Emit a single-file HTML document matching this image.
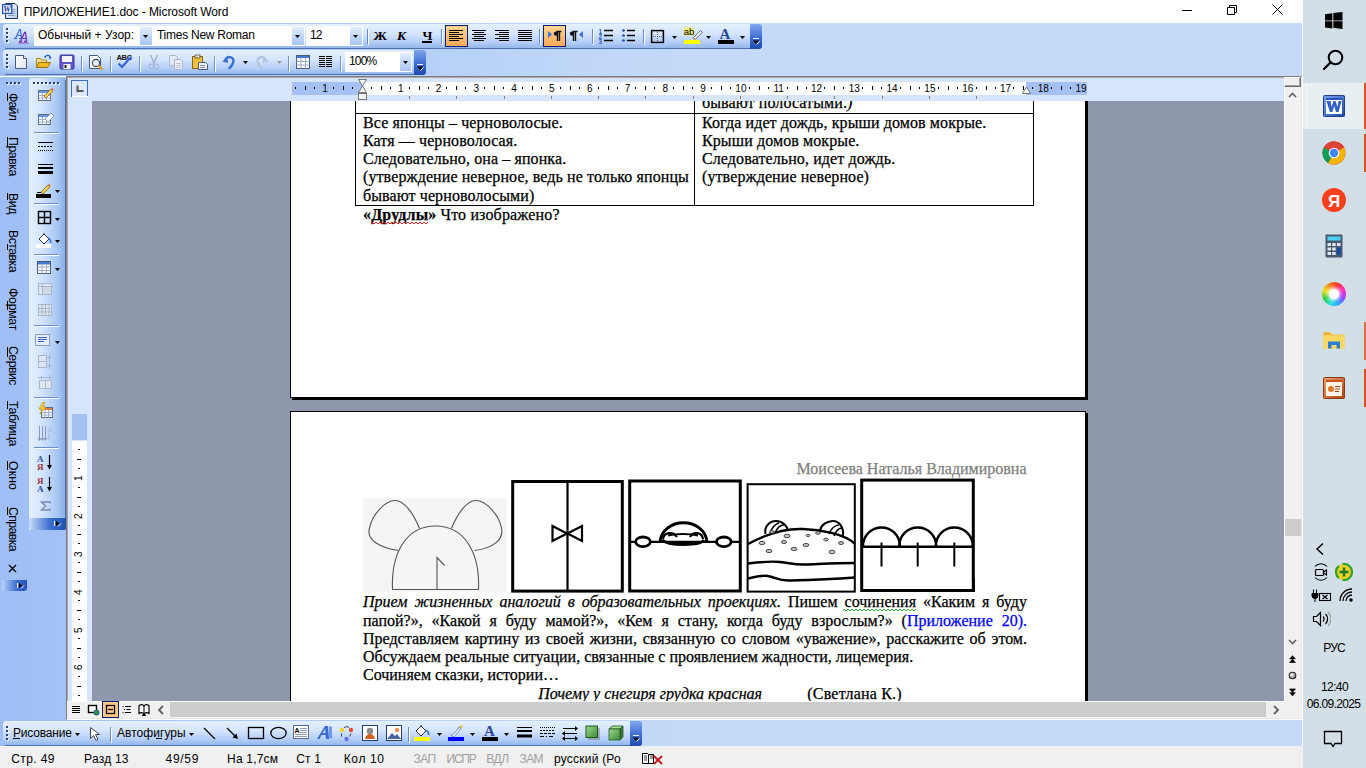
<!DOCTYPE html><html><head><meta charset="utf-8"><style>
*{margin:0;padding:0;box-sizing:border-box}
html,body{width:1366px;height:768px;overflow:hidden;background:#fff;font-family:"Liberation Sans",sans-serif;position:relative}
.a{position:absolute}
.t{position:absolute;white-space:nowrap;line-height:1}
.tb{position:absolute;background:linear-gradient(to bottom,#e4f0fe 0%,#d3e5fd 35%,#b9d3f8 65%,#9bbcef 100%);border-radius:3px 0 0 3px;border-bottom:1px solid #4f72b5}
.chev{position:absolute;background:linear-gradient(to bottom,#86aef0,#3f6fd0 55%,#2550b5);border-radius:0 3px 3px 0;border-bottom:1px solid #1c3f8c}
.sep{position:absolute;width:2px;height:15px;border-left:1px solid #6a8ccb;border-right:1px solid #fff}
.combo{position:absolute;background:#fff;height:20px;font-size:12px;color:#000;line-height:20px;padding-left:4px}
.dd{position:absolute;top:2px;right:1px;width:12px;height:16px;background:linear-gradient(to bottom,#dcebfe,#a9c8f5)}
.act{position:absolute;border:1px solid #0a246a;background:linear-gradient(to bottom,#ffd9a0,#fcb26a)}
.serif{font-family:"Liberation Serif",serif;font-size:16px;color:#000;white-space:nowrap;position:absolute;line-height:1}
.pg div{-webkit-text-stroke:0.25px currentColor}
</style></head><body><div class="a" style="left:0px;top:0px;width:1303px;height:23px;background:#fff"></div>
<svg class="a" style="left:0px;top:0px;" width="22" height="22" viewBox="0 0 22 22"><defs><linearGradient id="dg" x1="0" y1="0" x2="1" y2="1"><stop offset="0" stop-color="#ffffff"/><stop offset="1" stop-color="#b8cdf0"/></linearGradient></defs><path d="M5.5 3.5h9.5l2.5 2.5v12.5h-12z" fill="url(#dg)" stroke="#233556"/><path d="M8 15.5h7M12.5 9.5h3M12.5 11.5h3M12.5 13.5h3" stroke="#8aa2cc"/><rect x="2.6" y="4.6" width="9.2" height="8.8" fill="#fff" stroke="#2456c4" stroke-width="1.4"/><text x="3.3" y="11.6" font-family="Liberation Serif" font-size="8.5" font-weight="bold" font-style="italic" fill="#1a3aa6">W</text></svg>
<div class="t" style="left:23.8px;top:6.44px;font-family:'Liberation Sans',sans-serif;font-size:12px;color:#000;letter-spacing:-0.08px;">ПРИЛОЖЕНИЕ1.doc - Microsoft Word</div>
<div class="a" style="left:1182px;top:10px;width:10px;height:1px;background:#000"></div>
<svg class="a" style="left:1225px;top:3px;" width="13" height="13" viewBox="0 0 13 13"><path d="M2.5 4.5h7v7h-7z M4.5 4.5v-2h7v7h-2" fill="none" stroke="#000"/></svg>
<svg class="a" style="left:1271px;top:3px;" width="13" height="13" viewBox="0 0 13 13"><path d="M1.5 1.5l10 10M11.5 1.5l-10 10" stroke="#000" stroke-width="1"/></svg>
<div class="a" style="left:0px;top:23px;width:1303px;height:53px;background:linear-gradient(to right,#9ebef5 0px,#c4daf8 680px,#c4daf8 1303px)"></div>
<div class="a" style="left:66px;top:76px;width:1237px;height:1px;background:#808080"></div>
<div class="a" style="left:67px;top:77px;width:1236px;height:1px;background:#a8a8a8"></div>
<div class="a" style="left:0px;top:77px;width:67px;height:642px;background:linear-gradient(to right,#9ebef5 0px,#a3c2f5 67px)"></div>
<div class="a" style="left:0px;top:719px;width:1303px;height:27px;background:linear-gradient(to right,#9ebef5 0px,#c4daf8 680px,#c4daf8 1303px)"></div>
<div class="a" style="left:3px;top:24px;width:747px;height:24px;background:linear-gradient(to bottom,#e4f0fe 0%,#d4e5fd 40%,#b5cff7 75%,#94b7ec 100%);border-radius:3px 0 0 3px"></div>
<div class="a" style="left:5px;top:48px;width:745px;height:1px;background:#4f70b0"></div>
<div class="a" style="left:750px;top:24px;width:12px;height:25px;background:linear-gradient(to bottom,#7fa8ee,#3e6dd0 55%,#1f4aad);border-radius:0 3px 3px 0"></div>
<svg class="a" style="left:752px;top:38px;" width="9" height="8" viewBox="0 0 9 8"><path d="M1 0.5h6" stroke="#fff" stroke-width="1"/><path d="M1 2.5h6l-3 3.5z" fill="#000"/><path d="M1 3.5h6l-3 3.5z" fill="none"/><path d="M4.5 6.5l3-3" stroke="#fff"/></svg>
<div class="a" style="left:7px;top:29px;width:2px;height:2px;background:#fff"></div>
<div class="a" style="left:6px;top:28px;width:2px;height:2px;background:#27417e"></div>
<div class="a" style="left:7px;top:33px;width:2px;height:2px;background:#fff"></div>
<div class="a" style="left:6px;top:32px;width:2px;height:2px;background:#27417e"></div>
<div class="a" style="left:7px;top:37px;width:2px;height:2px;background:#fff"></div>
<div class="a" style="left:6px;top:36px;width:2px;height:2px;background:#27417e"></div>
<div class="a" style="left:7px;top:41px;width:2px;height:2px;background:#fff"></div>
<div class="a" style="left:6px;top:40px;width:2px;height:2px;background:#27417e"></div>
<svg class="a" style="left:13px;top:28px;" width="16" height="16" viewBox="0 0 16 16">
<path d="M1 10.5h3M6 10.5h3M2.5 10.5l4-9h1l1 9" fill="none" stroke="#3a6cd0" stroke-width="1.2"/>
<path d="M4.5 7.5h3.5" stroke="#3a6cd0"/>
<path d="M6 13.5h3M11 13.5h3M7.5 13.5l4-9h1l1 9" fill="none" stroke="#6b2fb3" stroke-width="1.3"/>
<path d="M9.5 10.5h3.5" stroke="#6b2fb3"/>
<path d="M5.5 15h10" stroke="#8a3cc8" stroke-width="1"/>
</svg>
<div class="a" style="left:34px;top:26px;width:119px;height:20px;background:#fff"></div>
<div class="t" style="left:38px;top:29.34px;font-family:'Liberation Sans',sans-serif;font-size:12px;color:#000;letter-spacing:0.03px;">Обычный + Узор:</div>
<div class="a" style="left:140px;top:27px;width:12px;height:18px;background:linear-gradient(to bottom,#e2eefe,#c2d8fa 50%,#a7c5f3)"></div>
<svg class="a" style="left:143px;top:35px;" width="5" height="3" viewBox="0 0 5 3"><path d="M0 0h5l-2.5 3z" fill="#000"/></svg>
<div class="a" style="left:153px;top:26px;width:152px;height:20px;background:#fff"></div>
<div class="t" style="left:157px;top:29.34px;font-family:'Liberation Sans',sans-serif;font-size:12px;color:#000;letter-spacing:-0.26px;">Times New Roman</div>
<div class="a" style="left:292px;top:27px;width:12px;height:18px;background:linear-gradient(to bottom,#e2eefe,#c2d8fa 50%,#a7c5f3)"></div>
<svg class="a" style="left:295px;top:35px;" width="5" height="3" viewBox="0 0 5 3"><path d="M0 0h5l-2.5 3z" fill="#000"/></svg>
<div class="a" style="left:306px;top:26px;width:57px;height:20px;background:#fff"></div>
<div class="t" style="left:310px;top:29.34px;font-family:'Liberation Sans',sans-serif;font-size:12px;color:#000;letter-spacing:-0.82px;">12</div>
<div class="a" style="left:350px;top:27px;width:12px;height:18px;background:linear-gradient(to bottom,#e2eefe,#c2d8fa 50%,#a7c5f3)"></div>
<svg class="a" style="left:353px;top:35px;" width="5" height="3" viewBox="0 0 5 3"><path d="M0 0h5l-2.5 3z" fill="#000"/></svg>
<div class="a" style="left:367px;top:29px;width:1px;height:15px;background:#6a8ccb"></div>
<div class="a" style="left:368px;top:30px;width:1px;height:15px;background:#fff"></div>
<div class="t" style="left:373.5px;top:28.69px;font-family:'Liberation Serif',serif;font-size:13.5px;color:#000;font-weight:bold">Ж</div>
<div class="t" style="left:397px;top:28.69px;font-family:'Liberation Serif',serif;font-size:13.5px;color:#000;font-weight:bold"><i>К</i></div>
<div class="t" style="left:422.5px;top:28.69px;font-family:'Liberation Serif',serif;font-size:13.5px;color:#000;font-weight:bold">Ч</div>
<div class="a" style="left:422px;top:41px;width:10px;height:1.5px;background:#000"></div>
<div class="a" style="left:441px;top:29px;width:1px;height:15px;background:#6a8ccb"></div>
<div class="a" style="left:442px;top:30px;width:1px;height:15px;background:#fff"></div>
<div class="a" style="left:445px;top:25px;width:23px;height:22px;border:1px solid #0b1d7a;background:linear-gradient(to bottom,#ffd793,#fdbd72 55%,#fca95a)"></div>
<div class="a" style="left:449px;top:30px;width:14px;height:1px;background:#000"></div>
<div class="a" style="left:449px;top:32px;width:10px;height:1px;background:#000"></div>
<div class="a" style="left:449px;top:34px;width:14px;height:1px;background:#000"></div>
<div class="a" style="left:449px;top:36px;width:10px;height:1px;background:#000"></div>
<div class="a" style="left:449px;top:38px;width:14px;height:1px;background:#000"></div>
<div class="a" style="left:449px;top:40px;width:10px;height:1px;background:#000"></div>
<div class="a" style="left:472px;top:30px;width:14px;height:1px;background:#000"></div>
<div class="a" style="left:474px;top:32px;width:10px;height:1px;background:#000"></div>
<div class="a" style="left:472px;top:34px;width:14px;height:1px;background:#000"></div>
<div class="a" style="left:474px;top:36px;width:10px;height:1px;background:#000"></div>
<div class="a" style="left:472px;top:38px;width:14px;height:1px;background:#000"></div>
<div class="a" style="left:474px;top:40px;width:10px;height:1px;background:#000"></div>
<div class="a" style="left:495px;top:30px;width:14px;height:1px;background:#000"></div>
<div class="a" style="left:499px;top:32px;width:10px;height:1px;background:#000"></div>
<div class="a" style="left:495px;top:34px;width:14px;height:1px;background:#000"></div>
<div class="a" style="left:499px;top:36px;width:10px;height:1px;background:#000"></div>
<div class="a" style="left:495px;top:38px;width:14px;height:1px;background:#000"></div>
<div class="a" style="left:499px;top:40px;width:10px;height:1px;background:#000"></div>
<div class="a" style="left:518px;top:30px;width:14px;height:1px;background:#000"></div>
<div class="a" style="left:518px;top:32px;width:14px;height:1px;background:#000"></div>
<div class="a" style="left:518px;top:34px;width:14px;height:1px;background:#000"></div>
<div class="a" style="left:518px;top:36px;width:14px;height:1px;background:#000"></div>
<div class="a" style="left:518px;top:38px;width:14px;height:1px;background:#000"></div>
<div class="a" style="left:518px;top:40px;width:14px;height:1px;background:#000"></div>
<div class="a" style="left:539px;top:29px;width:1px;height:15px;background:#6a8ccb"></div>
<div class="a" style="left:540px;top:30px;width:1px;height:15px;background:#fff"></div>
<div class="a" style="left:543px;top:25px;width:23px;height:22px;border:1px solid #0b1d7a;background:linear-gradient(to bottom,#ffd793,#fdbd72 55%,#fca95a)"></div>
<svg class="a" style="left:547px;top:30px;" width="16" height="12" viewBox="0 0 16 12"><path d="M1 1l4 3.5-4 3.5z" fill="#3f72d8"/><path d="M9.5 1.5h5M10.5 1.5v9.5M12.5 1.5v9.5" stroke="#111" stroke-width="1.4" fill="none"/><circle cx="9" cy="3.6" r="2.2" fill="#111"/></svg>
<svg class="a" style="left:569px;top:30px;" width="16" height="12" viewBox="0 0 16 12"><path d="M3.5 1.5h5M4.5 1.5v9.5M6.5 1.5v9.5" stroke="#111" stroke-width="1.4" fill="none"/><circle cx="3" cy="3.6" r="2.2" fill="#111"/><path d="M14 1l-4 3.5 4 3.5z" fill="#3f72d8"/></svg>
<div class="a" style="left:592px;top:29px;width:1px;height:15px;background:#6a8ccb"></div>
<div class="a" style="left:593px;top:30px;width:1px;height:15px;background:#fff"></div>
<svg class="a" style="left:597px;top:28px;" width="18" height="16" viewBox="0 0 18 16"><g font-family="Liberation Sans" font-size="6.5" font-weight="bold" fill="#2d5bc0"><text x="1.5" y="5.5">1</text><text x="1.5" y="10.5">2</text><text x="1.5" y="15.5">3</text></g><path d="M7 2.5h9M7 7.5h9M7 12.5h9" stroke="#000" stroke-width="1.3"/></svg>
<svg class="a" style="left:620px;top:28px;" width="18" height="16" viewBox="0 0 18 16"><path d="M3.5 1l2 1.5-2 1.5-2-1.5zM3.5 6l2 1.5-2 1.5-2-1.5zM3.5 11l2 1.5-2 1.5-2-1.5z" fill="#2d55b8"/><path d="M7 2.5h8M7 7.5h8M7 12.5h8" stroke="#000" stroke-width="1.3"/></svg>
<div class="a" style="left:643px;top:29px;width:1px;height:15px;background:#6a8ccb"></div>
<div class="a" style="left:644px;top:30px;width:1px;height:15px;background:#fff"></div>
<svg class="a" style="left:650px;top:29px;" width="16" height="16" viewBox="0 0 16 16"><rect x="1.6" y="1.6" width="11.8" height="11.8" fill="none" stroke="#000" stroke-width="1.5"/><rect x="3" y="7" width="1" height="1" fill="#666"/><rect x="5" y="7" width="1" height="1" fill="#666"/><rect x="7" y="7" width="1" height="1" fill="#666"/><rect x="9" y="7" width="1" height="1" fill="#666"/><rect x="11" y="7" width="1" height="1" fill="#666"/><rect x="7" y="3" width="1" height="1" fill="#666"/><rect x="7" y="5" width="1" height="1" fill="#666"/><rect x="7" y="9" width="1" height="1" fill="#666"/><rect x="7" y="11" width="1" height="1" fill="#666"/></svg>
<svg class="a" style="left:672px;top:36px;" width="5" height="3" viewBox="0 0 5 3"><path d="M0 0h5l-2.5 3z" fill="#000"/></svg>
<svg class="a" style="left:683px;top:27px;" width="20" height="19" viewBox="0 0 20 19"><rect x="1" y="0.5" width="10" height="8" fill="#f2ee70"/><text x="0.8" y="7.8" font-family="Liberation Sans" font-size="9.5" fill="#000">ab</text><path d="M10.5 10.5l7-7 1.8 1.8-7 7z" fill="#fafafa" stroke="#4a5a7a" stroke-width="0.9"/><path d="M9.5 11.5l1-1 1.8 1.8-1 1z" fill="#e0a050"/><rect x="1" y="13" width="16" height="4" fill="#ffff00"/></svg>
<svg class="a" style="left:706px;top:36px;" width="5" height="3" viewBox="0 0 5 3"><path d="M0 0h5l-2.5 3z" fill="#000"/></svg>
<svg class="a" style="left:716px;top:27px;" width="20" height="19" viewBox="0 0 20 19"><text x="9" y="12" text-anchor="middle" font-family="Liberation Serif" font-size="15" font-weight="bold" fill="#27489a">A</text><rect x="2" y="13" width="16" height="4" fill="#000"/></svg>
<svg class="a" style="left:740px;top:36px;" width="5" height="3" viewBox="0 0 5 3"><path d="M0 0h5l-2.5 3z" fill="#000"/></svg>
<div class="a" style="left:3px;top:50px;width:411px;height:24px;background:linear-gradient(to bottom,#e4f0fe 0%,#d4e5fd 40%,#b5cff7 75%,#94b7ec 100%);border-radius:3px 0 0 3px"></div>
<div class="a" style="left:5px;top:74px;width:409px;height:1px;background:#4f70b0"></div>
<div class="a" style="left:414px;top:50px;width:12px;height:25px;background:linear-gradient(to bottom,#7fa8ee,#3e6dd0 55%,#1f4aad);border-radius:0 3px 3px 0"></div>
<svg class="a" style="left:416px;top:64px;" width="9" height="8" viewBox="0 0 9 8"><path d="M1 0.5h6" stroke="#fff" stroke-width="1"/><path d="M1 2.5h6l-3 3.5z" fill="#000"/><path d="M1 3.5h6l-3 3.5z" fill="none"/><path d="M4.5 6.5l3-3" stroke="#fff"/></svg>
<div class="a" style="left:7px;top:55px;width:2px;height:2px;background:#fff"></div>
<div class="a" style="left:6px;top:54px;width:2px;height:2px;background:#27417e"></div>
<div class="a" style="left:7px;top:59px;width:2px;height:2px;background:#fff"></div>
<div class="a" style="left:6px;top:58px;width:2px;height:2px;background:#27417e"></div>
<div class="a" style="left:7px;top:63px;width:2px;height:2px;background:#fff"></div>
<div class="a" style="left:6px;top:62px;width:2px;height:2px;background:#27417e"></div>
<div class="a" style="left:7px;top:67px;width:2px;height:2px;background:#fff"></div>
<div class="a" style="left:6px;top:66px;width:2px;height:2px;background:#27417e"></div>
<svg class="a" style="left:14px;top:54px;" width="14" height="16" viewBox="0 0 14 16"><path d="M1.5 1.5h8l3 3v10h-11z" fill="url(#pg)" stroke="#44597c"/><path d="M9.5 1.5v3h3" fill="#fff" stroke="#44597c"/><defs><linearGradient id="pg" x1="0" y1="0" x2="1" y2="1"><stop offset="0" stop-color="#fff"/><stop offset="1" stop-color="#dfe4ec"/></linearGradient></defs></svg>
<svg class="a" style="left:35px;top:54px;" width="18" height="16" viewBox="0 0 18 16"><path d="M1.5 4.5h4l1 1.5h5v7.5h-10z" fill="#f6dc8a" stroke="#b08a2a"/><path d="M3.5 8.5h12l-3 5h-11z" fill="#f2b91f" stroke="#9a7213"/><path d="M9.5 3.5c2-3 5-3 6 0" fill="none" stroke="#2b5fc8" stroke-width="1.4"/><path d="M14 2.5l2.5 1.5-2 1.5z" fill="#2b5fc8"/></svg>
<svg class="a" style="left:59px;top:54px;" width="16" height="16" viewBox="0 0 16 16"><rect x="1" y="1" width="14" height="14" rx="1" fill="#5d58c8" stroke="#3b3796"/><rect x="3" y="2" width="10" height="6" fill="#f4f4fa"/><rect x="4.5" y="10" width="7" height="5" fill="#f4f4f4"/><rect x="5.5" y="11" width="2" height="3" fill="#222"/></svg>
<div class="a" style="left:81px;top:56px;width:1px;height:15px;background:#6a8ccb"></div>
<div class="a" style="left:82px;top:57px;width:1px;height:15px;background:#fff"></div>
<svg class="a" style="left:88px;top:54px;" width="17" height="17" viewBox="0 0 17 17"><path d="M1.5 1.5h8l3 3v10h-11z" fill="#fff" stroke="#44597c"/><circle cx="8" cy="9" r="3.6" fill="#e8eef6" stroke="#3c4a64" stroke-width="1.2"/><path d="M10.5 11.5l4 4" stroke="#e39a2e" stroke-width="2.4"/></svg>
<div class="a" style="left:110px;top:56px;width:1px;height:15px;background:#6a8ccb"></div>
<div class="a" style="left:111px;top:57px;width:1px;height:15px;background:#fff"></div>
<svg class="a" style="left:116px;top:53px;" width="18" height="17" viewBox="0 0 18 17"><text x="0.5" y="7" font-family="Liberation Sans" font-size="7.5" font-weight="bold" fill="#111" letter-spacing="-0.3">ABC</text><path d="M2.5 10.5l3.5 3.5 9-10" fill="none" stroke="#3a64d6" stroke-width="2.2"/></svg>
<div class="a" style="left:139px;top:56px;width:1px;height:15px;background:#6a8ccb"></div>
<div class="a" style="left:140px;top:57px;width:1px;height:15px;background:#fff"></div>
<svg class="a" style="left:148px;top:54px;" width="12" height="16" viewBox="0 0 12 16"><path d="M2.5 1l4 9M9.5 1l-4 9" stroke="#9fb2d6" stroke-width="1.4"/><circle cx="3.5" cy="12.5" r="2.3" fill="none" stroke="#a8bad8" stroke-width="1.3"/><circle cx="8.5" cy="12.5" r="2.3" fill="none" stroke="#a8bad8" stroke-width="1.3"/></svg>
<svg class="a" style="left:168px;top:54px;" width="17" height="16" viewBox="0 0 17 16"><path d="M1.5 1.5h6l2 2v8h-8z" fill="#e2e8f2" stroke="#a9b8d3"/><path d="M6.5 5.5h6l2 2v8h-8z" fill="#e9eef6" stroke="#a9b8d3"/><path d="M8 9.5h5M8 11.5h5M8 13.5h5" stroke="#b8c4dc"/></svg>
<svg class="a" style="left:191px;top:54px;" width="18" height="16" viewBox="0 0 18 16"><rect x="1.5" y="2.5" width="10" height="12" fill="#f0c040" stroke="#8a6a1a"/><rect x="4" y="1" width="5" height="3" fill="#d6d6d6" stroke="#6a5a2a" stroke-width="0.8"/><path d="M7.5 8.5h7l2 2v5h-9z" fill="#eef2f8" stroke="#44597c"/><path d="M9 11.5h5M9 13.5h5" stroke="#8090b0"/></svg>
<div class="a" style="left:214px;top:56px;width:1px;height:15px;background:#6a8ccb"></div>
<div class="a" style="left:215px;top:57px;width:1px;height:15px;background:#fff"></div>
<svg class="a" style="left:221px;top:54px;" width="16" height="15" viewBox="0 0 16 15"><path d="M4 6c3-5 10-3 8 3-1 3-3 4-4 6" fill="none" stroke="#3a72d8" stroke-width="2.4"/><path d="M1 7.5l5.5-4 0.5 5.5z" fill="#3a72d8"/></svg>
<svg class="a" style="left:243px;top:61px;" width="5" height="3" viewBox="0 0 5 3"><path d="M0 0h5l-2.5 3z" fill="#000"/></svg>
<svg class="a" style="left:254px;top:54px;" width="16" height="15" viewBox="0 0 16 15"><path d="M12 6c-3-5-10-3-8 3 1 3 3 4 4 6" fill="none" stroke="#b6c6e0" stroke-width="2.4"/><path d="M15 7.5l-5.5-4-0.5 5.5z" fill="#b6c6e0"/></svg>
<svg class="a" style="left:277px;top:61px;" width="5" height="3" viewBox="0 0 5 3"><path d="M0 0h5l-2.5 3z" fill="#9a9a9a"/></svg>
<div class="a" style="left:288px;top:56px;width:1px;height:15px;background:#6a8ccb"></div>
<div class="a" style="left:289px;top:57px;width:1px;height:15px;background:#fff"></div>
<svg class="a" style="left:295px;top:54px;" width="16" height="16" viewBox="0 0 16 16"><rect x="1.5" y="1.5" width="13" height="13" fill="#fff" stroke="#4a5a78"/><rect x="2" y="2" width="12" height="2" fill="#4a78d8"/><path d="M1.5 7.5h13M1.5 11h13M6 4v10.5M10.5 4v10.5" stroke="#9aaac6"/></svg>
<svg class="a" style="left:318px;top:55px;" width="16" height="13" viewBox="0 0 16 13"><path d="M1 1.5h6M1 3.5h6M1 5.5h6M1 7.5h6M1 9.5h6M1 11.5h6M8 1.5h6M8 3.5h6M8 5.5h6M8 7.5h6M8 9.5h6M8 11.5h6" stroke="#000" stroke-width="1.2"/></svg>
<div class="a" style="left:340px;top:56px;width:1px;height:15px;background:#6a8ccb"></div>
<div class="a" style="left:341px;top:57px;width:1px;height:15px;background:#fff"></div>
<div class="a" style="left:345px;top:52px;width:67px;height:20px;background:#fff"></div>
<div class="t" style="left:349px;top:54.64px;font-family:'Liberation Sans',sans-serif;font-size:12px;color:#000;letter-spacing:-0.82px;">100%</div>
<div class="a" style="left:400px;top:53px;width:11px;height:18px;background:linear-gradient(to bottom,#e2eefe,#c2d8fa 50%,#a7c5f3)"></div>
<svg class="a" style="left:403px;top:61px;" width="5" height="3" viewBox="0 0 5 3"><path d="M0 0h5l-2.5 3z" fill="#000"/></svg>
<div class="a" style="left:7px;top:83px;width:2px;height:2px;background:#fff"></div>
<div class="a" style="left:6px;top:82px;width:2px;height:2px;background:#27417e"></div>
<div class="a" style="left:11px;top:83px;width:2px;height:2px;background:#fff"></div>
<div class="a" style="left:10px;top:82px;width:2px;height:2px;background:#27417e"></div>
<div class="a" style="left:15px;top:83px;width:2px;height:2px;background:#fff"></div>
<div class="a" style="left:14px;top:82px;width:2px;height:2px;background:#27417e"></div>
<div class="a" style="left:19px;top:83px;width:2px;height:2px;background:#fff"></div>
<div class="a" style="left:18px;top:82px;width:2px;height:2px;background:#27417e"></div>
<div class="a" style="left:6px;top:93px;writing-mode:vertical-rl;font-family:'Liberation Sans',sans-serif;font-size:12.3px;line-height:14px;letter-spacing:-0.81px;color:#000;white-space:nowrap">Файл</div>
<div class="a" style="left:6px;top:137px;writing-mode:vertical-rl;font-family:'Liberation Sans',sans-serif;font-size:12.3px;line-height:14px;letter-spacing:-0.42px;color:#000;white-space:nowrap">Правка</div>
<div class="a" style="left:6px;top:193px;writing-mode:vertical-rl;font-family:'Liberation Sans',sans-serif;font-size:12.3px;line-height:14px;letter-spacing:-0.42px;color:#000;white-space:nowrap">Вид</div>
<div class="a" style="left:6px;top:230px;writing-mode:vertical-rl;font-family:'Liberation Sans',sans-serif;font-size:12.3px;line-height:14px;letter-spacing:-0.53px;color:#000;white-space:nowrap">Вставка</div>
<div class="a" style="left:6px;top:288px;writing-mode:vertical-rl;font-family:'Liberation Sans',sans-serif;font-size:12.3px;line-height:14px;letter-spacing:-0.28px;color:#000;white-space:nowrap">Формат</div>
<div class="a" style="left:6px;top:346px;writing-mode:vertical-rl;font-family:'Liberation Sans',sans-serif;font-size:12.3px;line-height:14px;letter-spacing:-0.52px;color:#000;white-space:nowrap">Сервис</div>
<div class="a" style="left:6px;top:401px;writing-mode:vertical-rl;font-family:'Liberation Sans',sans-serif;font-size:12.3px;line-height:14px;letter-spacing:-0.46px;color:#000;white-space:nowrap">Таблица</div>
<div class="a" style="left:6px;top:461px;writing-mode:vertical-rl;font-family:'Liberation Sans',sans-serif;font-size:12.3px;line-height:14px;letter-spacing:0.1px;color:#000;white-space:nowrap">Окно</div>
<div class="a" style="left:6px;top:507px;writing-mode:vertical-rl;font-family:'Liberation Sans',sans-serif;font-size:12.3px;line-height:14px;letter-spacing:-0.61px;color:#000;white-space:nowrap">Справка</div>
<div class="a" style="left:7px;top:93px;width:1px;height:8px;background:#000"></div>
<div class="a" style="left:7px;top:137px;width:1px;height:9px;background:#000"></div>
<div class="a" style="left:7px;top:193px;width:1px;height:7px;background:#000"></div>
<div class="a" style="left:7px;top:244px;width:1px;height:6px;background:#000"></div>
<div class="a" style="left:7px;top:301px;width:1px;height:9px;background:#000"></div>
<div class="a" style="left:7px;top:347px;width:1px;height:10px;background:#000"></div>
<div class="a" style="left:7px;top:401px;width:1px;height:8px;background:#000"></div>
<div class="a" style="left:7px;top:461px;width:1px;height:9px;background:#000"></div>
<div class="a" style="left:7px;top:507px;width:1px;height:8px;background:#000"></div>
<svg class="a" style="left:8px;top:564px;" width="9" height="9" viewBox="0 0 9 9"><path d="M1 1l7 7M8 1l-7 7" stroke="#000" stroke-width="1.3"/></svg>
<div class="a" style="left:2px;top:580px;width:25px;height:11px;background:linear-gradient(to right,#b9d3fb,#3a6ad0 60%,#2552b8);border-radius:0 0 3px 3px"></div>
<svg class="a" style="left:17px;top:582px;" width="8" height="8" viewBox="0 0 8 8"><path d="M0.5 1v5" stroke="#fff"/><path d="M2 1l3.5 2.5L2 6z" fill="#000"/><path d="M4 6.5l3-3" stroke="#fff"/></svg>
<div class="a" style="left:29px;top:78px;width:37px;height:452px;background:linear-gradient(to right,#e4f0fe 0%,#d2e4fd 35%,#a9c8f4 75%,#86ace6 100%);border-radius:3px 3px 0 0"></div>
<div class="a" style="left:65px;top:80px;width:1px;height:450px;background:#4f70b0"></div>
<div class="a" style="left:34px;top:83px;width:2px;height:2px;background:#fff"></div>
<div class="a" style="left:33px;top:82px;width:2px;height:2px;background:#27417e"></div>
<div class="a" style="left:38px;top:83px;width:2px;height:2px;background:#fff"></div>
<div class="a" style="left:37px;top:82px;width:2px;height:2px;background:#27417e"></div>
<div class="a" style="left:42px;top:83px;width:2px;height:2px;background:#fff"></div>
<div class="a" style="left:41px;top:82px;width:2px;height:2px;background:#27417e"></div>
<div class="a" style="left:46px;top:83px;width:2px;height:2px;background:#fff"></div>
<div class="a" style="left:45px;top:82px;width:2px;height:2px;background:#27417e"></div>
<div class="a" style="left:50px;top:83px;width:2px;height:2px;background:#fff"></div>
<div class="a" style="left:49px;top:82px;width:2px;height:2px;background:#27417e"></div>
<div class="a" style="left:54px;top:83px;width:2px;height:2px;background:#fff"></div>
<div class="a" style="left:53px;top:82px;width:2px;height:2px;background:#27417e"></div>
<div class="a" style="left:58px;top:83px;width:2px;height:2px;background:#fff"></div>
<div class="a" style="left:57px;top:82px;width:2px;height:2px;background:#27417e"></div>
<div class="a" style="left:34px;top:132px;width:24px;height:1px;background:#6a8ccb"></div>
<div class="a" style="left:35px;top:133px;width:24px;height:1px;background:#fff"></div>
<div class="a" style="left:34px;top:203px;width:24px;height:1px;background:#6a8ccb"></div>
<div class="a" style="left:35px;top:204px;width:24px;height:1px;background:#fff"></div>
<div class="a" style="left:34px;top:254px;width:24px;height:1px;background:#6a8ccb"></div>
<div class="a" style="left:35px;top:255px;width:24px;height:1px;background:#fff"></div>
<div class="a" style="left:34px;top:325px;width:24px;height:1px;background:#6a8ccb"></div>
<div class="a" style="left:35px;top:326px;width:24px;height:1px;background:#fff"></div>
<div class="a" style="left:34px;top:397px;width:24px;height:1px;background:#6a8ccb"></div>
<div class="a" style="left:35px;top:398px;width:24px;height:1px;background:#fff"></div>
<div class="a" style="left:34px;top:447px;width:24px;height:1px;background:#6a8ccb"></div>
<div class="a" style="left:35px;top:448px;width:24px;height:1px;background:#fff"></div>
<div class="a" style="left:29px;top:518px;width:37px;height:12px;background:linear-gradient(to right,#c8dcfb,#4070d0 55%,#2050b0);border-radius:0 0 3px 3px"></div>
<svg class="a" style="left:54px;top:520px;" width="9" height="8" viewBox="0 0 9 8"><path d="M0.5 1v5" stroke="#fff"/><path d="M2 1l3.5 2.5L2 6z" fill="#000"/><path d="M4 6.5l3-3" stroke="#fff"/></svg>
<svg class="a" style="left:37px;top:86px;" width="17" height="17" viewBox="0 0 17 17"><rect x="1.5" y="4.5" width="12" height="10" fill="#fff" stroke="#5a6a8a"/><rect x="2" y="5" width="11" height="2" fill="#6a96e0"/><path d="M1.5 9.5h12M1.5 12h12M5.5 7v7.5M9.5 7v7.5" stroke="#a0b0cc"/><path d="M7 10l7-7 2 2-7 7z" fill="#f2cc50" stroke="#8a6a1a" stroke-width="0.8"/><path d="M14 3l1-1.5 2 2-1.5 1z" fill="#e07050"/></svg>
<svg class="a" style="left:37px;top:110px;" width="17" height="17" viewBox="0 0 17 17"><rect x="1.5" y="4.5" width="12" height="10" fill="#fff" stroke="#5a6a8a"/><rect x="2" y="5" width="11" height="2" fill="#6a96e0"/><path d="M1.5 9.5h12M1.5 12h12M5.5 7v7.5M9.5 7v7.5" stroke="#a0b0cc"/><path d="M8 9l6-6 3 3-6 6z" fill="#f4f6fa" stroke="#7a8aa8" stroke-width="0.8"/></svg>
<svg class="a" style="left:37px;top:138px;" width="17" height="17" viewBox="0 0 17 17"><path d="M1 4.5h15" stroke="#000"/><path d="M1 8.5h15" stroke="#000" stroke-dasharray="2 1"/><path d="M1 12.5h15" stroke="#000" stroke-dasharray="1 1"/></svg>
<svg class="a" style="left:37px;top:160px;" width="17" height="17" viewBox="0 0 17 17"><path d="M1 4.5h15" stroke="#000"/><path d="M1 8h15" stroke="#000" stroke-width="2"/><path d="M1 12.5h15" stroke="#000" stroke-width="3"/></svg>
<svg class="a" style="left:36px;top:182px;" width="17" height="17" viewBox="0 0 17 17"><path d="M5 10l7-7 2 2-7 7z" fill="#f2cc50" stroke="#8a6a1a" stroke-width="0.8"/><path d="M12 3l1-1.5 2 2-1.5 1z" fill="#e07050"/><rect x="0" y="12" width="15" height="4" fill="#000"/><path d="M1 10.5h4" stroke="#000"/></svg>
<svg class="a" style="left:55px;top:190px;" width="5" height="3" viewBox="0 0 5 3"><path d="M0 0h5l-2.5 3z" fill="#000"/></svg>
<svg class="a" style="left:37px;top:210px;" width="17" height="17" viewBox="0 0 17 17"><rect x="1.5" y="1.5" width="12" height="12" fill="none" stroke="#000" stroke-width="1.4"/><path d="M7.5 1.5v12M1.5 7.5h12" stroke="#000" stroke-width="1.4"/></svg>
<svg class="a" style="left:55px;top:218px;" width="5" height="3" viewBox="0 0 5 3"><path d="M0 0h5l-2.5 3z" fill="#000"/></svg>
<svg class="a" style="left:36px;top:232px;" width="17" height="17" viewBox="0 0 17 17"><path d="M3 7l5-5 5 5-5 5z" fill="#fff" stroke="#333"/><path d="M8 2v-1" stroke="#333"/><path d="M12 6c2 1 3 3 2.5 5" fill="none" stroke="#3a72d8" stroke-width="1.6"/><rect x="0" y="12" width="15" height="4" fill="#fff"/></svg>
<svg class="a" style="left:55px;top:240px;" width="5" height="3" viewBox="0 0 5 3"><path d="M0 0h5l-2.5 3z" fill="#000"/></svg>
<svg class="a" style="left:36px;top:260px;" width="17" height="17" viewBox="0 0 17 17"><rect x="1.5" y="1.5" width="13" height="12" fill="#fff" stroke="#4a5a78"/><rect x="2" y="2" width="12" height="2.5" fill="#4a78d8"/><path d="M1.5 7h13M1.5 10.5h13M6 4.5v9M10.5 4.5v9" stroke="#9aaac6"/></svg>
<svg class="a" style="left:55px;top:268px;" width="5" height="3" viewBox="0 0 5 3"><path d="M0 0h5l-2.5 3z" fill="#000"/></svg>
<svg class="a" style="left:37px;top:281px;" width="17" height="17" viewBox="0 0 17 17"><rect x="1.5" y="2.5" width="13" height="11" fill="#dfe6f2" stroke="#aab6cc"/><path d="M1.5 5.5h13M5.5 2.5v11" stroke="#aab6cc"/><rect x="6" y="6" width="8" height="7" fill="#cfd8e8"/></svg>
<svg class="a" style="left:37px;top:302px;" width="17" height="17" viewBox="0 0 17 17"><rect x="1.5" y="2.5" width="13" height="11" fill="#dfe6f2" stroke="#aab6cc"/><path d="M1.5 6.5h13M1.5 10h13M5 2.5v11M8.5 2.5v11M12 2.5v11" stroke="#aab6cc"/></svg>
<svg class="a" style="left:35px;top:333px;" width="17" height="17" viewBox="0 0 17 17"><rect x="0.5" y="1.5" width="14" height="11" fill="#e6ecf8" stroke="#8a9ab8"/><path d="M3 4.5h9M3 6.5h9M3 8.5h6" stroke="#3a64c0"/></svg>
<svg class="a" style="left:55px;top:341px;" width="5" height="3" viewBox="0 0 5 3"><path d="M0 0h5l-2.5 3z" fill="#000"/></svg>
<svg class="a" style="left:37px;top:353px;" width="17" height="17" viewBox="0 0 17 17"><rect x="1.5" y="2.5" width="8" height="12" fill="#dfe6f2" stroke="#aab6cc"/><path d="M1.5 8.5h8M12.5 1v15M10.5 4.5h4M10.5 12.5h4" stroke="#aab6cc"/></svg>
<svg class="a" style="left:37px;top:374px;" width="17" height="17" viewBox="0 0 17 17"><rect x="2.5" y="6.5" width="12" height="8" fill="#dfe6f2" stroke="#aab6cc"/><path d="M8.5 6.5v8M1 3.5h15M4.5 1.5v4M12.5 1.5v4" stroke="#aab6cc"/></svg>
<svg class="a" style="left:37px;top:402px;" width="17" height="17" viewBox="0 0 17 17"><rect x="4.5" y="5.5" width="11" height="10" fill="#fff" stroke="#5a6a8a"/><rect x="5" y="6" width="10" height="2" fill="#e07a3a"/><path d="M4.5 10.5h11M4.5 13h11M8 8v7.5M11.5 8v7.5" stroke="#a0b0cc"/><path d="M6 0l-4 7h3l-2 5 6-7h-3l2-5z" fill="#f6d23a" stroke="#b08a10" stroke-width="0.6"/></svg>
<svg class="a" style="left:37px;top:425px;" width="17" height="17" viewBox="0 0 17 17"><path d="M2.5 1v14M5.5 1v14M8.5 1v14" stroke="#8a9ab8"/><path d="M1 13l1.5 2.5 1.5-2.5M4 13l1.5 2.5 1.5-2.5M7 13l1.5 2.5 1.5-2.5" fill="none" stroke="#8a9ab8"/><text x="10" y="7" font-family="Liberation Serif" font-size="7" fill="#aab6cc">A</text><path d="M12 8v7" stroke="#aab6cc"/></svg>
<svg class="a" style="left:37px;top:454px;" width="17" height="17" viewBox="0 0 17 17"><text x="0" y="7.5" font-family="Liberation Serif" font-size="9" font-weight="bold" fill="#2a4c9c">A</text><text x="0" y="16" font-family="Liberation Serif" font-size="9" font-weight="bold" fill="#a0303a">Я</text><path d="M12.5 1v13" stroke="#000" stroke-width="1.2"/><path d="M10 11l2.5 4.5 2.5-4.5z" fill="#000"/></svg>
<svg class="a" style="left:37px;top:476px;" width="17" height="17" viewBox="0 0 17 17"><text x="0" y="7.5" font-family="Liberation Serif" font-size="9" font-weight="bold" fill="#a0303a">Я</text><text x="0" y="16" font-family="Liberation Serif" font-size="9" font-weight="bold" fill="#2a4c9c">A</text><path d="M12.5 1v13" stroke="#000" stroke-width="1.2"/><path d="M10 11l2.5 4.5 2.5-4.5z" fill="#000"/></svg>
<svg class="a" style="left:37px;top:497px;" width="17" height="17" viewBox="0 0 17 17"><path d="M13 6.5v-1.5h-8.5l4 4-4 4h8.5v-1.5" fill="none" stroke="#7a88b0" stroke-width="1.4"/></svg>
<div class="a" style="left:66px;top:76px;width:1px;height:643px;background:#808080"></div>
<div class="a" style="left:67px;top:77px;width:1px;height:642px;background:#a8a8a8"></div>
<div class="a" style="left:68px;top:78px;width:1217px;height:23px;background:#d6e5fb"></div>
<div class="a" style="left:71px;top:80px;width:17px;height:17px;border:1px solid #3c6fd0;background:#dde9fb"></div>
<div class="a" style="left:72px;top:96px;width:16px;height:1px;background:#fff"></div>
<svg class="a" style="left:76px;top:85px;" width="8" height="8" viewBox="0 0 8 8"><path d="M1.5 0.5v5.5h6" fill="none" stroke="#555" stroke-width="2"/></svg>
<div class="a" style="left:292px;top:82px;width:71px;height:13px;background:#a5c1f3"></div>
<div class="a" style="left:363px;top:82px;width:663px;height:13px;background:#fff"></div>
<div class="a" style="left:1026px;top:82px;width:61px;height:13px;background:#a5c1f3"></div>
<div class="a" style="left:295px;top:87px;width:1px;height:2px;background:#000"></div>
<div class="a" style="left:314px;top:87px;width:1px;height:2px;background:#000"></div>
<div class="a" style="left:305px;top:86px;width:1px;height:4px;background:#000"></div>
<div class="a" style="left:333px;top:87px;width:1px;height:2px;background:#000"></div>
<div class="a" style="left:352px;top:87px;width:1px;height:2px;background:#000"></div>
<div class="a" style="left:343px;top:86px;width:1px;height:4px;background:#000"></div>
<div class="t" style="left:322.31942934782603px;top:83.53px;font-family:'Liberation Sans',sans-serif;font-size:10px;color:#000;">1</div>
<div class="a" style="left:371px;top:87px;width:1px;height:2px;background:#000"></div>
<div class="a" style="left:390px;top:87px;width:1px;height:2px;background:#000"></div>
<div class="a" style="left:381px;top:86px;width:1px;height:4px;background:#000"></div>
<div class="a" style="left:409px;top:87px;width:1px;height:2px;background:#000"></div>
<div class="a" style="left:428px;top:87px;width:1px;height:2px;background:#000"></div>
<div class="a" style="left:419px;top:86px;width:1px;height:4px;background:#000"></div>
<div class="t" style="left:397.91942934782605px;top:83.53px;font-family:'Liberation Sans',sans-serif;font-size:10px;color:#000;">1</div>
<div class="a" style="left:446px;top:87px;width:1px;height:2px;background:#000"></div>
<div class="a" style="left:465px;top:87px;width:1px;height:2px;background:#000"></div>
<div class="a" style="left:456px;top:86px;width:1px;height:4px;background:#000"></div>
<div class="t" style="left:435.71942934782606px;top:83.53px;font-family:'Liberation Sans',sans-serif;font-size:10px;color:#000;">2</div>
<div class="a" style="left:484px;top:87px;width:1px;height:2px;background:#000"></div>
<div class="a" style="left:503px;top:87px;width:1px;height:2px;background:#000"></div>
<div class="a" style="left:494px;top:86px;width:1px;height:4px;background:#000"></div>
<div class="t" style="left:473.519429347826px;top:83.53px;font-family:'Liberation Sans',sans-serif;font-size:10px;color:#000;">3</div>
<div class="a" style="left:522px;top:87px;width:1px;height:2px;background:#000"></div>
<div class="a" style="left:541px;top:87px;width:1px;height:2px;background:#000"></div>
<div class="a" style="left:532px;top:86px;width:1px;height:4px;background:#000"></div>
<div class="t" style="left:511.319429347826px;top:83.53px;font-family:'Liberation Sans',sans-serif;font-size:10px;color:#000;">4</div>
<div class="a" style="left:560px;top:87px;width:1px;height:2px;background:#000"></div>
<div class="a" style="left:579px;top:87px;width:1px;height:2px;background:#000"></div>
<div class="a" style="left:570px;top:86px;width:1px;height:4px;background:#000"></div>
<div class="t" style="left:549.1194293478261px;top:83.53px;font-family:'Liberation Sans',sans-serif;font-size:10px;color:#000;">5</div>
<div class="a" style="left:598px;top:87px;width:1px;height:2px;background:#000"></div>
<div class="a" style="left:617px;top:87px;width:1px;height:2px;background:#000"></div>
<div class="a" style="left:608px;top:86px;width:1px;height:4px;background:#000"></div>
<div class="t" style="left:586.919429347826px;top:83.53px;font-family:'Liberation Sans',sans-serif;font-size:10px;color:#000;">6</div>
<div class="a" style="left:635px;top:87px;width:1px;height:2px;background:#000"></div>
<div class="a" style="left:654px;top:87px;width:1px;height:2px;background:#000"></div>
<div class="a" style="left:645px;top:86px;width:1px;height:4px;background:#000"></div>
<div class="t" style="left:624.7194293478261px;top:83.53px;font-family:'Liberation Sans',sans-serif;font-size:10px;color:#000;">7</div>
<div class="a" style="left:673px;top:87px;width:1px;height:2px;background:#000"></div>
<div class="a" style="left:692px;top:87px;width:1px;height:2px;background:#000"></div>
<div class="a" style="left:683px;top:86px;width:1px;height:4px;background:#000"></div>
<div class="t" style="left:662.5194293478261px;top:83.53px;font-family:'Liberation Sans',sans-serif;font-size:10px;color:#000;">8</div>
<div class="a" style="left:711px;top:87px;width:1px;height:2px;background:#000"></div>
<div class="a" style="left:730px;top:87px;width:1px;height:2px;background:#000"></div>
<div class="a" style="left:721px;top:86px;width:1px;height:4px;background:#000"></div>
<div class="t" style="left:700.319429347826px;top:83.53px;font-family:'Liberation Sans',sans-serif;font-size:10px;color:#000;">9</div>
<div class="a" style="left:749px;top:87px;width:1px;height:2px;background:#000"></div>
<div class="a" style="left:768px;top:87px;width:1px;height:2px;background:#000"></div>
<div class="a" style="left:759px;top:86px;width:1px;height:4px;background:#000"></div>
<div class="t" style="left:735.3388586956521px;top:83.53px;font-family:'Liberation Sans',sans-serif;font-size:10px;color:#000;">10</div>
<div class="a" style="left:787px;top:87px;width:1px;height:2px;background:#000"></div>
<div class="a" style="left:806px;top:87px;width:1px;height:2px;background:#000"></div>
<div class="a" style="left:797px;top:86px;width:1px;height:4px;background:#000"></div>
<div class="t" style="left:773.5097826086956px;top:83.53px;font-family:'Liberation Sans',sans-serif;font-size:10px;color:#000;">11</div>
<div class="a" style="left:824px;top:87px;width:1px;height:2px;background:#000"></div>
<div class="a" style="left:843px;top:87px;width:1px;height:2px;background:#000"></div>
<div class="a" style="left:834px;top:86px;width:1px;height:4px;background:#000"></div>
<div class="t" style="left:810.9388586956521px;top:83.53px;font-family:'Liberation Sans',sans-serif;font-size:10px;color:#000;">12</div>
<div class="a" style="left:862px;top:87px;width:1px;height:2px;background:#000"></div>
<div class="a" style="left:881px;top:87px;width:1px;height:2px;background:#000"></div>
<div class="a" style="left:872px;top:86px;width:1px;height:4px;background:#000"></div>
<div class="t" style="left:848.7388586956521px;top:83.53px;font-family:'Liberation Sans',sans-serif;font-size:10px;color:#000;">13</div>
<div class="a" style="left:900px;top:87px;width:1px;height:2px;background:#000"></div>
<div class="a" style="left:919px;top:87px;width:1px;height:2px;background:#000"></div>
<div class="a" style="left:910px;top:86px;width:1px;height:4px;background:#000"></div>
<div class="t" style="left:886.538858695652px;top:83.53px;font-family:'Liberation Sans',sans-serif;font-size:10px;color:#000;">14</div>
<div class="a" style="left:938px;top:87px;width:1px;height:2px;background:#000"></div>
<div class="a" style="left:957px;top:87px;width:1px;height:2px;background:#000"></div>
<div class="a" style="left:948px;top:86px;width:1px;height:4px;background:#000"></div>
<div class="t" style="left:924.3388586956521px;top:83.53px;font-family:'Liberation Sans',sans-serif;font-size:10px;color:#000;">15</div>
<div class="a" style="left:976px;top:87px;width:1px;height:2px;background:#000"></div>
<div class="a" style="left:995px;top:87px;width:1px;height:2px;background:#000"></div>
<div class="a" style="left:986px;top:86px;width:1px;height:4px;background:#000"></div>
<div class="t" style="left:962.1388586956521px;top:83.53px;font-family:'Liberation Sans',sans-serif;font-size:10px;color:#000;">16</div>
<div class="a" style="left:1013px;top:87px;width:1px;height:2px;background:#000"></div>
<div class="a" style="left:1032px;top:87px;width:1px;height:2px;background:#000"></div>
<div class="a" style="left:1023px;top:86px;width:1px;height:4px;background:#000"></div>
<div class="t" style="left:999.938858695652px;top:83.53px;font-family:'Liberation Sans',sans-serif;font-size:10px;color:#000;">17</div>
<div class="a" style="left:1051px;top:87px;width:1px;height:2px;background:#000"></div>
<div class="a" style="left:1070px;top:87px;width:1px;height:2px;background:#000"></div>
<div class="a" style="left:1061px;top:86px;width:1px;height:4px;background:#000"></div>
<div class="t" style="left:1037.7388586956522px;top:83.53px;font-family:'Liberation Sans',sans-serif;font-size:10px;color:#000;">18</div>
<div class="t" style="left:1075.5388586956522px;top:83.53px;font-family:'Liberation Sans',sans-serif;font-size:10px;color:#000;">19</div>
<div class="a" style="left:409px;top:96px;width:1px;height:3px;background:#808080"></div>
<div class="a" style="left:456px;top:96px;width:1px;height:3px;background:#808080"></div>
<div class="a" style="left:504px;top:96px;width:1px;height:3px;background:#808080"></div>
<div class="a" style="left:551px;top:96px;width:1px;height:3px;background:#808080"></div>
<div class="a" style="left:598px;top:96px;width:1px;height:3px;background:#808080"></div>
<div class="a" style="left:645px;top:96px;width:1px;height:3px;background:#808080"></div>
<div class="a" style="left:693px;top:96px;width:1px;height:3px;background:#808080"></div>
<div class="a" style="left:740px;top:96px;width:1px;height:3px;background:#808080"></div>
<div class="a" style="left:787px;top:96px;width:1px;height:3px;background:#808080"></div>
<div class="a" style="left:834px;top:96px;width:1px;height:3px;background:#808080"></div>
<div class="a" style="left:882px;top:96px;width:1px;height:3px;background:#808080"></div>
<div class="a" style="left:929px;top:96px;width:1px;height:3px;background:#808080"></div>
<div class="a" style="left:976px;top:96px;width:1px;height:3px;background:#808080"></div>
<svg class="a" style="left:357px;top:78px;" width="11" height="23" viewBox="0 0 11 23"><path d="M1.5 1.5h8l-4 6.5z" fill="#f4f4f4" stroke="#777"/><path d="M5.5 8l4 6.5h-8z" fill="#f4f4f4" stroke="#777"/><rect x="1.5" y="15.5" width="8" height="6" fill="#f4f4f4" stroke="#777"/></svg>
<svg class="a" style="left:1021px;top:86px;" width="11" height="9" viewBox="0 0 11 9"><path d="M5.5 1l4 6.5h-8z" fill="#f4f4f4" stroke="#777"/></svg>
<div class="a" style="left:68px;top:101px;width:24px;height:600px;background:#d6e5fb"></div>
<div class="a" style="left:72px;top:414px;width:15px;height:26px;background:#a5c1f3"></div>
<div class="a" style="left:72px;top:441px;width:15px;height:260px;background:#fff"></div>
<div class="a" style="left:78px;top:449px;width:2px;height:1px;background:#000"></div>
<div class="a" style="left:78px;top:468px;width:2px;height:1px;background:#000"></div>
<div class="a" style="left:77px;top:459px;width:4px;height:1px;background:#000"></div>
<div class="a" style="left:78px;top:487px;width:2px;height:1px;background:#000"></div>
<div class="a" style="left:78px;top:506px;width:2px;height:1px;background:#000"></div>
<div class="a" style="left:77px;top:497px;width:4px;height:1px;background:#000"></div>
<div class="a" style="left:74px;top:473.3px;width:10px;height:8px;font-family:'Liberation Sans',sans-serif;font-size:10px;line-height:10px;writing-mode:vertical-rl;transform:rotate(180deg);color:#000">1</div>
<div class="a" style="left:78px;top:525px;width:2px;height:1px;background:#000"></div>
<div class="a" style="left:78px;top:543px;width:2px;height:1px;background:#000"></div>
<div class="a" style="left:77px;top:534px;width:4px;height:1px;background:#000"></div>
<div class="a" style="left:74px;top:511.1px;width:10px;height:8px;font-family:'Liberation Sans',sans-serif;font-size:10px;line-height:10px;writing-mode:vertical-rl;transform:rotate(180deg);color:#000">2</div>
<div class="a" style="left:78px;top:562px;width:2px;height:1px;background:#000"></div>
<div class="a" style="left:78px;top:581px;width:2px;height:1px;background:#000"></div>
<div class="a" style="left:77px;top:572px;width:4px;height:1px;background:#000"></div>
<div class="a" style="left:74px;top:548.9px;width:10px;height:8px;font-family:'Liberation Sans',sans-serif;font-size:10px;line-height:10px;writing-mode:vertical-rl;transform:rotate(180deg);color:#000">3</div>
<div class="a" style="left:78px;top:600px;width:2px;height:1px;background:#000"></div>
<div class="a" style="left:78px;top:619px;width:2px;height:1px;background:#000"></div>
<div class="a" style="left:77px;top:610px;width:4px;height:1px;background:#000"></div>
<div class="a" style="left:74px;top:586.7px;width:10px;height:8px;font-family:'Liberation Sans',sans-serif;font-size:10px;line-height:10px;writing-mode:vertical-rl;transform:rotate(180deg);color:#000">4</div>
<div class="a" style="left:78px;top:638px;width:2px;height:1px;background:#000"></div>
<div class="a" style="left:78px;top:657px;width:2px;height:1px;background:#000"></div>
<div class="a" style="left:77px;top:648px;width:4px;height:1px;background:#000"></div>
<div class="a" style="left:74px;top:624.5px;width:10px;height:8px;font-family:'Liberation Sans',sans-serif;font-size:10px;line-height:10px;writing-mode:vertical-rl;transform:rotate(180deg);color:#000">5</div>
<div class="a" style="left:78px;top:676px;width:2px;height:1px;background:#000"></div>
<div class="a" style="left:78px;top:695px;width:2px;height:1px;background:#000"></div>
<div class="a" style="left:77px;top:686px;width:4px;height:1px;background:#000"></div>
<div class="a" style="left:74px;top:662.3px;width:10px;height:8px;font-family:'Liberation Sans',sans-serif;font-size:10px;line-height:10px;writing-mode:vertical-rl;transform:rotate(180deg);color:#000">6</div>
<div class="a" style="left:92px;top:101px;width:1192px;height:600px;background:#8f97ad"></div>
<div class="a pg" style="left:0;top:0;width:1284px;height:701px;clip-path:inset(101px 0 0 92px);overflow:hidden">
<div class="a" style="left:290px;top:40px;width:796px;height:358px;background:#fff;border:1px solid #000"></div>
<div class="a" style="left:1086px;top:42px;width:2px;height:358px;background:#000"></div>
<div class="a" style="left:292px;top:398px;width:796px;height:2px;background:#000"></div>
<div class="a" style="left:290px;top:411px;width:796px;height:400px;background:#fff;border:1px solid #000"></div>
<div class="a" style="left:1086px;top:413px;width:2px;height:400px;background:#000"></div>
<div class="a" style="left:355px;top:60px;width:1px;height:146px;background:#000"></div>
<div class="a" style="left:694px;top:60px;width:1px;height:146px;background:#000"></div>
<div class="a" style="left:1033px;top:60px;width:1px;height:146px;background:#000"></div>
<div class="a" style="left:355px;top:113px;width:679px;height:1px;background:#000"></div>
<div class="a" style="left:355px;top:205px;width:679px;height:1px;background:#000"></div>
<div class="t" style="left:702px;top:94.60px;font-family:'Liberation Serif',serif;font-size:16px;color:#000;letter-spacing:0.1px">бывают полосатыми.<i>)</i></div>
<div class="t" style="left:363px;top:114.60px;font-family:'Liberation Serif',serif;font-size:16px;color:#000;letter-spacing:0.1px">Все японцы – черноволосые.</div>
<div class="t" style="left:363px;top:132.60px;font-family:'Liberation Serif',serif;font-size:16px;color:#000;letter-spacing:0.1px">Катя — черноволосая.</div>
<div class="t" style="left:363px;top:150.60px;font-family:'Liberation Serif',serif;font-size:16px;color:#000;letter-spacing:0.1px">Следовательно, она – японка.</div>
<div class="t" style="left:363px;top:168.60px;font-family:'Liberation Serif',serif;font-size:16px;color:#000;letter-spacing:0.1px">(утверждение неверное, ведь не только японцы</div>
<div class="t" style="left:363px;top:187.60px;font-family:'Liberation Serif',serif;font-size:16px;color:#000;letter-spacing:0.1px">бывают черноволосыми)</div>
<div class="t" style="left:702px;top:114.60px;font-family:'Liberation Serif',serif;font-size:16px;color:#000;letter-spacing:0.1px">Когда идет дождь, крыши домов мокрые.</div>
<div class="t" style="left:702px;top:132.60px;font-family:'Liberation Serif',serif;font-size:16px;color:#000;letter-spacing:0.1px">Крыши домов мокрые.</div>
<div class="t" style="left:702px;top:150.60px;font-family:'Liberation Serif',serif;font-size:16px;color:#000;letter-spacing:0.1px">Следовательно, идет дождь.</div>
<div class="t" style="left:702px;top:168.60px;font-family:'Liberation Serif',serif;font-size:16px;color:#000;letter-spacing:0.1px">(утверждение неверное)</div>
<div class="t" style="left:363px;top:206.60px;font-family:'Liberation Serif',serif;font-size:16px;color:#000;letter-spacing:0.15px"><b>«Друдлы»</b> Что изображено?</div>
<svg class="a" style="left:371px;top:221px;" width="58" height="4" viewBox="0 0 58 4"><path d="M0 3 L1 1 L3 3 L5 1 L7 3 L9 1 L11 3 L13 1 L15 3 L17 1 L19 3 L21 1 L23 3 L25 1 L27 3 L29 1 L31 3 L33 1 L35 3 L37 1 L39 3 L41 1 L43 3 L45 1 L47 3 L49 1 L51 3 L53 1 L55 3 L57 1" fill="none" stroke="#e01010" stroke-width="0.9"/></svg>
<div class="t" style="left:600px;width:426.5px;text-align:right;top:460.6px;font-family:'Liberation Serif',serif;font-size:16px;color:#808080">Моисеева Наталья Владимировна</div>
<svg class="a" style="left:360px;top:470px;" width="630" height="130" viewBox="0 0 630 130"><rect x="3" y="28" width="144" height="94" fill="#f5f5f5"/><g fill="none" stroke="#555" stroke-width="1.1">
<path d="M38.5 80.5 C20.0 78.0 6.0 70.0 9.5 58.0 C12.0 45.0 25.0 30.5 35.0 30.5 C45.0 30.5 54.0 45.0 59.5 58.5"/>
<path d="M114.5 80.5 C133.0 78.0 144.0 70.0 141.5 58.0 C139.0 45.0 126.0 30.5 116.0 30.5 C106.0 30.5 97.0 45.0 91.5 58.5"/>
<path d="M32.5 119.5 C31.0 85.0 45.0 56.0 75.5 56.0 C106.0 56.0 120.0 85.0 118.5 119.5 Z"/>
<path d="M77.0 119.5 V87.5 L84.5 95.5"/>
</g><rect x="152.70000000000005" y="11.5" width="109.6" height="109.6" fill="#fff" stroke="#000" stroke-width="3"/><path d="M207.5 11.0 V122" stroke="#000" stroke-width="2.2"/><path d="M192.5 56.0 L207.0 63.5 L192.5 71.0 Z M222.0 56.0 L207.5 63.5 L222.0 71.0 Z" fill="none" stroke="#000" stroke-width="2.2" stroke-linejoin="miter"/><rect x="269.70000000000005" y="11" width="110.6" height="110" fill="#fff" stroke="#000" stroke-width="3"/><path d="M270.0 71.8 H380" stroke="#000" stroke-width="2.3"/><g fill="#fff" stroke="#000" stroke-width="2.8"><ellipse cx="283" cy="71.79999999999995" rx="7.4" ry="4.8"/><ellipse cx="363.79999999999995" cy="71.79999999999995" rx="7.4" ry="4.8"/></g><g fill="none" stroke="#000"><path d="M300.0 72.0 C301.0 60.0 312.0 52.8 323.5 52.8 C335.0 52.8 346.0 60.0 347.0 72.0" stroke-width="3"/><path d="M302.0 70.0 C308.0 76.0 340.0 76.0 344.0 70.0" stroke-width="3"/><path d="M308.0 65.5 C316.0 63.5 330.0 63.5 338.0 65.5" stroke-width="2.2"/><path d="M303.0 69.0 C304.0 62.0 313.0 61.0 317.0 67.0" stroke-width="2.2"/><path d="M330.0 67.0 C333.0 61.0 342.0 62.0 343.0 69.0" stroke-width="2.2"/></g><rect x="387.6" y="14.199999999999989" width="107.2" height="107.4" fill="#fff" stroke="#000" stroke-width="2"/><g fill="none" stroke="#000" stroke-width="2">
<path d="M405.5 64.0 C404.0 57.0 409.0 51.0 416.0 51.0 C423.0 51.0 428.0 57.0 427.5 60.5"/>
<path d="M460.0 60.5 C461.0 55.0 467.0 51.0 473.0 51.0 C479.0 51.0 484.0 57.0 483.0 66.0"/>
<path d="M410.0 63.0 C412.0 58.0 415.0 54.0 419.0 53.0 M415.0 63.0 C417.0 58.0 420.0 55.0 424.0 55.0" stroke-width="1.5"/>
<path d="M469.0 64.0 C471.0 59.0 475.0 55.0 479.0 55.0 M474.0 66.0 C476.0 61.0 479.0 58.0 482.0 58.0" stroke-width="1.5"/>
<path d="M388.0 74.0 C410.0 62.0 430.0 58.5 443.0 59.0 C460.0 59.5 485.0 64.0 495.0 74.0" stroke-width="2.4"/>
<path d="M388.0 93.5 C400.0 92.0 410.0 91.0 420.0 92.0 C430.0 93.0 435.0 95.0 445.0 94.5 C460.0 94.0 475.0 93.0 495.0 93.0" stroke-width="2.4"/>
<path d="M388.0 108.5 C395.0 107.0 402.0 105.0 408.0 106.0 C415.0 107.0 418.0 111.0 430.0 110.5 C450.0 110.0 475.0 109.0 495.0 107.5" stroke-width="2.4"/>
</g><g fill="#c8c8c8" stroke="#444" stroke-width="1"><ellipse cx="402" cy="73" rx="3" ry="1.6"/><ellipse cx="412" cy="62" rx="2.5" ry="1.2"/><ellipse cx="427" cy="66" rx="3" ry="1.8"/><ellipse cx="448" cy="65.5" rx="2" ry="1"/><ellipse cx="458" cy="63" rx="2.3" ry="1.3"/><ellipse cx="424" cy="72" rx="2.5" ry="1.5"/><ellipse cx="446" cy="75" rx="3" ry="1.5"/><ellipse cx="409" cy="81" rx="3" ry="1.6"/><ellipse cx="434" cy="79" rx="3" ry="1.6"/><ellipse cx="466" cy="69.5" rx="2.3" ry="1.3"/><ellipse cx="481" cy="73" rx="2.5" ry="1.5"/><ellipse cx="472" cy="82" rx="3" ry="1.8"/></g><rect x="501.70000000000005" y="10.100000000000023" width="111.6" height="110.4" fill="#fff" stroke="#000" stroke-width="3"/><path d="M502.0 76.7 H613" stroke="#000" stroke-width="2.4"/><path d="M503.0 76.0 A18.5 18.5 0 0 1 540.0 76.0" fill="none" stroke="#000" stroke-width="2.4"/><path d="M521.5 72.5 V96.5" stroke="#000" stroke-width="2"/><path d="M539.2 76.0 A18.5 18.5 0 0 1 576.2 76.0" fill="none" stroke="#000" stroke-width="2.4"/><path d="M557.7 72.5 V96.5" stroke="#000" stroke-width="2"/><path d="M575.8 76.0 A18.5 18.5 0 0 1 612.8 76.0" fill="none" stroke="#000" stroke-width="2.4"/><path d="M594.3 72.5 V96.5" stroke="#000" stroke-width="2"/><path d="M614.5 108.0 V122" stroke="#000" stroke-width="0.8"/></svg>
<div class="a" style="left:363px;top:593.60px;width:664px;font-family:'Liberation Serif',serif;font-size:16px;line-height:16px;white-space:nowrap;text-align:justify;text-align-last:justify;color:#000"><i>Прием жизненных аналогий в образовательных проекциях.</i> Пишем сочинения «Каким я буду</div>
<div class="a" style="left:363px;top:612.60px;width:664px;font-family:'Liberation Serif',serif;font-size:16px;line-height:16px;white-space:nowrap;text-align:justify;text-align-last:justify;color:#000">папой?», «Какой я буду мамой?», «Кем я стану, когда буду взрослым?» (<span style="color:#0000ff">Приложение 20).</span></div>
<div class="a" style="left:363px;top:631.00px;width:664px;font-family:'Liberation Serif',serif;font-size:16px;line-height:16px;white-space:nowrap;text-align:justify;text-align-last:justify;color:#000">Представляем картину из своей жизни, связанную со словом «уважение», расскажите об этом.</div>
<div class="a" style="left:363px;top:648.80px;width:664px;font-family:'Liberation Serif',serif;font-size:16px;line-height:16px;white-space:nowrap;color:#000">Обсуждаем реальные ситуации, связанные с проявлением жадности, лицемерия.</div>
<div class="a" style="left:363px;top:667.20px;width:664px;font-family:'Liberation Serif',serif;font-size:16px;line-height:16px;white-space:nowrap;color:#000">Сочиняем сказки, истории…</div>
<div class="t" style="left:538.3px;top:685.90px;font-family:'Liberation Serif',serif;font-size:16px;color:#000;"><i>Почему у снегиря грудка красная</i></div>
<div class="t" style="left:807.3px;top:685.90px;font-family:'Liberation Serif',serif;font-size:16px;color:#000;letter-spacing:0.2px">(Светлана К.)</div>
<svg class="a" style="left:843px;top:608px;" width="74" height="4" viewBox="0 0 74 4"><path d="M0 3 L1 1 L3 3 L5 1 L7 3 L9 1 L11 3 L13 1 L15 3 L17 1 L19 3 L21 1 L23 3 L25 1 L27 3 L29 1 L31 3 L33 1 L35 3 L37 1 L39 3 L41 1 L43 3 L45 1 L47 3 L49 1 L51 3 L53 1 L55 3 L57 1 L59 3 L61 1 L63 3 L65 1 L67 3 L69 1 L71 3 L73 1" fill="none" stroke="#20a020" stroke-width="0.9"/></svg>
</div>
<div class="a" style="left:1284px;top:77px;width:1px;height:624px;background:#fff"></div>
<div class="a" style="left:1285px;top:77px;width:16px;height:642px;background:#f0f0f0"></div>
<div class="a" style="left:1301px;top:77px;width:1px;height:642px;background:#e6e6e6"></div>
<div class="a" style="left:1302px;top:0px;width:1px;height:768px;background:#fff"></div>
<div class="a" style="left:1284px;top:77px;width:17px;height:10px;background:#f0f0f0;border:1px solid #6e6e6e;border-top-color:#fff;border-left-color:#fff;box-shadow:inset -1px -1px 0 #a0a0a0"></div>
<svg class="a" style="left:1288px;top:92px;" width="9" height="6" viewBox="0 0 9 6"><path d="M1 5l3.5-3.5L8 5" fill="none" stroke="#606060" stroke-width="1.6"/></svg>
<div class="a" style="left:1285px;top:519px;width:16px;height:17px;background:#cdcdcd"></div>
<svg class="a" style="left:1288px;top:639px;" width="9" height="6" viewBox="0 0 9 6"><path d="M1 1l3.5 3.5L8 1" fill="none" stroke="#606060" stroke-width="1.6"/></svg>
<svg class="a" style="left:1288px;top:655px;" width="9" height="9" viewBox="0 0 9 9"><path d="M4.5 0.5l3 3.5h-6z M4.5 4l3 3.5h-6z M1.5 7.5h6" fill="#000" stroke="#000" stroke-width="0.4"/></svg>
<svg class="a" style="left:1288px;top:671px;" width="9" height="9" viewBox="0 0 9 9"><circle cx="4.5" cy="4.5" r="3.3" fill="url(#gball)" stroke="#222" stroke-width="1.1"/><defs><radialGradient id="gball" cx="0.35" cy="0.35" r="0.7"><stop offset="0" stop-color="#fff"/><stop offset="1" stop-color="#777"/></radialGradient></defs></svg>
<svg class="a" style="left:1288px;top:688px;" width="9" height="9" viewBox="0 0 9 9"><path d="M1.5 1h6 M4.5 4.5l3-3.5h-6z M4.5 8l3-3.5h-6z" fill="#000" stroke="#000" stroke-width="0.4"/></svg>
<div class="a" style="left:67px;top:701px;width:1218px;height:1px;background:#fff"></div>
<div class="a" style="left:67px;top:702px;width:1235px;height:17px;background:#f0f0f0"></div>
<div class="a" style="left:67px;top:718px;width:1235px;height:1px;background:#e6e6e6"></div>
<div class="a" style="left:67px;top:719px;width:1236px;height:1px;background:#fff"></div>
<svg class="a" style="left:71px;top:704px;" width="12" height="12" viewBox="0 0 12 12"><path d="M1 2.5h8M1 4.5h8M1 6.5h8M1 8.5h8" stroke="#000" stroke-width="1.2"/></svg>
<svg class="a" style="left:87px;top:703px;" width="14" height="14" viewBox="0 0 14 14"><rect x="1.5" y="2.5" width="8" height="7" fill="#fff" stroke="#000" stroke-width="1.4"/><circle cx="9.5" cy="9.5" r="2.6" fill="#2a9a3a" stroke="#1a3aa0" stroke-width="0.8"/></svg>
<div class="a" style="left:102px;top:701px;width:17px;height:17px;border:1px solid #0b1d7a;background:#fdc77e"></div>
<svg class="a" style="left:105px;top:704px;" width="12" height="12" viewBox="0 0 12 12"><rect x="1.5" y="1.5" width="8" height="8" fill="none" stroke="#000" stroke-width="1.3"/><path d="M3 5.5h5" stroke="#000" stroke-width="1.2"/></svg>
<svg class="a" style="left:122px;top:704px;" width="11" height="11" viewBox="0 0 11 11"><path d="M0.5 2.5h1M3 2.5h6M2 5.5h1M4.5 5.5h4M0.5 8.5h1M3 8.5h6" stroke="#000" stroke-width="1.2"/></svg>
<svg class="a" style="left:138px;top:703px;" width="12" height="14" viewBox="0 0 12 14"><path d="M1 2.5c2-1 4-1 5 0.5c1-1.5 3-1.5 5-0.5v8c-2-1-4-1-5 0.5c-1-1.5-3-1.5-5-0.5z" fill="#fff" stroke="#000" stroke-width="1.2"/><path d="M6 3v8M6 10.5l-1.5 2h3z" stroke="#000"/></svg>
<svg class="a" style="left:157px;top:705px;" width="8" height="10" viewBox="0 0 8 10"><path d="M6 1L2 5l4 4" fill="none" stroke="#606060" stroke-width="1.8"/></svg>
<div class="a" style="left:170px;top:702px;width:1096px;height:15px;background:#cdcdcd"></div>
<svg class="a" style="left:1272px;top:705px;" width="8" height="10" viewBox="0 0 8 10"><path d="M2 1l4 4-4 4" fill="none" stroke="#606060" stroke-width="1.8"/></svg>
<div class="a" style="left:3px;top:721px;width:627px;height:24px;background:linear-gradient(to bottom,#e4f0fe 0%,#d4e5fd 40%,#b5cff7 75%,#94b7ec 100%);border-radius:3px 0 0 3px"></div>
<div class="a" style="left:5px;top:745px;width:625px;height:1px;background:#4f70b0"></div>
<div class="a" style="left:630px;top:721px;width:12px;height:25px;background:linear-gradient(to bottom,#7fa8ee,#3e6dd0 55%,#1f4aad);border-radius:0 3px 3px 0"></div>
<svg class="a" style="left:632px;top:735px;" width="9" height="8" viewBox="0 0 9 8"><path d="M1 0.5h6" stroke="#fff" stroke-width="1"/><path d="M1 2.5h6l-3 3.5z" fill="#000"/><path d="M1 3.5h6l-3 3.5z" fill="none"/><path d="M4.5 6.5l3-3" stroke="#fff"/></svg>
<div class="a" style="left:7px;top:727px;width:2px;height:2px;background:#fff"></div>
<div class="a" style="left:6px;top:726px;width:2px;height:2px;background:#27417e"></div>
<div class="a" style="left:7px;top:731px;width:2px;height:2px;background:#fff"></div>
<div class="a" style="left:6px;top:730px;width:2px;height:2px;background:#27417e"></div>
<div class="a" style="left:7px;top:735px;width:2px;height:2px;background:#fff"></div>
<div class="a" style="left:6px;top:734px;width:2px;height:2px;background:#27417e"></div>
<div class="a" style="left:7px;top:739px;width:2px;height:2px;background:#fff"></div>
<div class="a" style="left:6px;top:738px;width:2px;height:2px;background:#27417e"></div>
<div class="t" style="left:13px;top:726.54px;font-family:'Liberation Sans',sans-serif;font-size:12px;color:#000;letter-spacing:-0.20px;">Рисование</div>
<div class="a" style="left:13px;top:738px;width:7px;height:1px;background:#000"></div>
<svg class="a" style="left:75px;top:733px;" width="5" height="3" viewBox="0 0 5 3"><path d="M0 0h5l-2.5 3z" fill="#000"/></svg>
<svg class="a" style="left:89px;top:726px;" width="12" height="16" viewBox="0 0 12 16"><path d="M1.5 1.5v11l3-3 2.5 5 2-1-2.5-5h4z" fill="#fff" stroke="#445" stroke-width="1"/></svg>
<div class="a" style="left:110px;top:727px;width:1px;height:15px;background:#6a8ccb"></div>
<div class="a" style="left:111px;top:728px;width:1px;height:15px;background:#fff"></div>
<div class="t" style="left:117px;top:726.54px;font-family:'Liberation Sans',sans-serif;font-size:12px;color:#000;letter-spacing:0.04px;">Автофигуры</div>
<div class="a" style="left:156px;top:738px;width:6px;height:1px;background:#000"></div>
<svg class="a" style="left:189px;top:733px;" width="5" height="3" viewBox="0 0 5 3"><path d="M0 0h5l-2.5 3z" fill="#000"/></svg>
<svg class="a" style="left:203px;top:727px;" width="14" height="13" viewBox="0 0 14 13"><path d="M1 1l11 11" stroke="#000" stroke-width="1.2"/></svg>
<svg class="a" style="left:226px;top:727px;" width="14" height="13" viewBox="0 0 14 13"><path d="M1 1l9 9" stroke="#000" stroke-width="1.2"/><path d="M12 12l-5.5-1.5 4-4z" fill="#000"/></svg>
<svg class="a" style="left:247px;top:726px;" width="18" height="14" viewBox="0 0 18 14"><rect x="1.5" y="1.5" width="15" height="11" fill="none" stroke="#000" stroke-width="1.3"/></svg>
<svg class="a" style="left:270px;top:726px;" width="18" height="14" viewBox="0 0 18 14"><ellipse cx="8.5" cy="7" rx="7.7" ry="5.7" fill="none" stroke="#000" stroke-width="1.3"/></svg>
<svg class="a" style="left:293px;top:725px;" width="16" height="15" viewBox="0 0 16 15"><rect x="0.5" y="0.5" width="15" height="13" fill="#fff" stroke="#5a6a8a"/><text x="1.5" y="8" font-family="Liberation Sans" font-size="7" font-weight="bold" fill="#000">A</text><path d="M7 3.5h7M7 5.5h7M7 7.5h7M2 9.5h12M2 11.5h12" stroke="#7080a0" stroke-width="0.8"/></svg>
<svg class="a" style="left:316px;top:725px;" width="18" height="16" viewBox="0 0 18 16"><path d="M1 14l8-13h3l1 13h-3l-0.5-4h-4l-2 4z" fill="#3a6ad8"/><path d="M6.5 8h3l-0.3-4z" fill="#cfe0fa"/><path d="M13 1.5h3v12h-3" fill="#6f9ae8"/></svg>
<svg class="a" style="left:338px;top:725px;" width="17" height="17" viewBox="0 0 17 17"><circle cx="4" cy="5" r="2.2" fill="#f4d030"/><circle cx="13" cy="5" r="2.2" fill="#e05030"/><circle cx="8.5" cy="14" r="2.2" fill="#6a70e0"/><path d="M6 2.5c2-1 4-1 5 0M3.5 8.5v3M13 8.5l-1.5 3" fill="none" stroke="#445" stroke-width="1"/></svg>
<svg class="a" style="left:362px;top:725px;" width="16" height="16" viewBox="0 0 16 16"><rect x="0.5" y="0.5" width="15" height="15" fill="#fff" stroke="#2a3a6a"/><circle cx="8" cy="6" r="3.2" fill="#888"/><path d="M3 14c1-4 3-5 5-5s4 1 5 5z" fill="#d06020"/></svg>
<svg class="a" style="left:386px;top:725px;" width="16" height="16" viewBox="0 0 16 16"><rect x="0.5" y="0.5" width="15" height="15" fill="#fff" stroke="#2a3a6a"/><path d="M1 14l5-6 3 3 2-2 4 5z" fill="#4a64a8"/><circle cx="11" cy="5" r="2" fill="#f08030"/></svg>
<div class="a" style="left:408px;top:727px;width:1px;height:15px;background:#6a8ccb"></div>
<div class="a" style="left:409px;top:728px;width:1px;height:15px;background:#fff"></div>
<svg class="a" style="left:413px;top:724px;" width="20" height="18" viewBox="0 0 20 18"><path d="M3 7l5-5 5 5-5 5z" fill="#fff" stroke="#333"/><path d="M8 2v-1" stroke="#333"/><path d="M12 6c3 1 4 3 3.5 5" fill="none" stroke="#3a72d8" stroke-width="1.8"/><rect x="1" y="13" width="16" height="4" fill="#ffff00"/></svg>
<svg class="a" style="left:437px;top:733px;" width="5" height="3" viewBox="0 0 5 3"><path d="M0 0h5l-2.5 3z" fill="#000"/></svg>
<svg class="a" style="left:447px;top:724px;" width="18" height="18" viewBox="0 0 18 18"><path d="M4 11c2 0 5-3 8-8l2 1c-3 5-6 8-8 9z" fill="#eef2fa" stroke="#5070a0" stroke-width="0.8"/><path d="M12 3l2-2 2 2-2 1z" fill="#e8b840"/><rect x="1" y="13" width="16" height="4" fill="#0000ff"/></svg>
<svg class="a" style="left:470px;top:733px;" width="5" height="3" viewBox="0 0 5 3"><path d="M0 0h5l-2.5 3z" fill="#000"/></svg>
<svg class="a" style="left:481px;top:723px;" width="18" height="19" viewBox="0 0 18 19"><text x="8.5" y="12.5" text-anchor="middle" font-family="Liberation Serif" font-size="15" font-weight="bold" fill="#27489a">A</text><rect x="1" y="14" width="16" height="4" fill="#000"/></svg>
<svg class="a" style="left:504px;top:733px;" width="5" height="3" viewBox="0 0 5 3"><path d="M0 0h5l-2.5 3z" fill="#000"/></svg>
<svg class="a" style="left:516px;top:726px;" width="17" height="14" viewBox="0 0 17 14"><path d="M1 1.5h15" stroke="#000" stroke-width="1"/><path d="M1 5h15" stroke="#000" stroke-width="2"/><path d="M1 10h15" stroke="#000" stroke-width="3"/></svg>
<svg class="a" style="left:539px;top:726px;" width="17" height="14" viewBox="0 0 17 14"><path d="M1 1.5h15" stroke="#000" stroke-dasharray="1 1"/><path d="M1 4.5h15" stroke="#000" stroke-dasharray="2 1"/><path d="M1 7.5h15" stroke="#000" stroke-dasharray="3 1"/><path d="M1 10.5h15" stroke="#000" stroke-dasharray="4 2 1 2"/></svg>
<svg class="a" style="left:562px;top:725px;" width="17" height="16" viewBox="0 0 17 16"><path d="M1 3.5h14M1 8.5h14M1 13.5h14" stroke="#000" stroke-width="1.2"/><path d="M16 3.5l-3-2.5v5zM0 8.5l3-2.5v5zM0 13.5l3-2.5v5zM16 13.5l-3-2.5v5z" fill="#000"/></svg>
<svg class="a" style="left:585px;top:725px;" width="16" height="16" viewBox="0 0 16 16"><rect x="3" y="3" width="12" height="12" fill="#555" opacity="0.35"/><rect x="1" y="1" width="11.5" height="11.5" fill="url(#gg)" stroke="#1e5a1e" stroke-width="1"/><defs><linearGradient id="gg" x1="0" y1="0" x2="1" y2="1"><stop offset="0" stop-color="#9fd88a"/><stop offset="1" stop-color="#3a8a3a"/></linearGradient></defs></svg>
<svg class="a" style="left:608px;top:725px;" width="17" height="17" viewBox="0 0 17 17"><path d="M1 4l3-3h11l-3 3z" fill="#a8dc98" stroke="#1e5a1e" stroke-width="0.8"/><path d="M12 4l3-3v11l-3 3z" fill="#3a7a3a" stroke="#1e5a1e" stroke-width="0.8"/><rect x="1" y="4" width="11" height="11" fill="url(#gg)" stroke="#1e5a1e" stroke-width="0.8"/></svg>
<div class="a" style="left:0px;top:746px;width:1303px;height:22px;background:#f0f0f0"></div>
<div class="t" style="left:11.2px;top:752.54px;font-family:'Liberation Sans',sans-serif;font-size:12px;color:#000;letter-spacing:0.39px;">Стр. 49</div>
<div class="t" style="left:84.1px;top:752.54px;font-family:'Liberation Sans',sans-serif;font-size:12px;color:#000;letter-spacing:0.22px;">Разд 13</div>
<div class="t" style="left:165.5px;top:752.54px;font-family:'Liberation Sans',sans-serif;font-size:12px;color:#000;letter-spacing:0.71px;">49/59</div>
<div class="t" style="left:227px;top:752.54px;font-family:'Liberation Sans',sans-serif;font-size:12px;color:#000;letter-spacing:0.21px;">На 1,7см</div>
<div class="t" style="left:296.2px;top:752.54px;font-family:'Liberation Sans',sans-serif;font-size:12px;color:#000;letter-spacing:0.16px;">Ст 1</div>
<div class="t" style="left:343.7px;top:752.54px;font-family:'Liberation Sans',sans-serif;font-size:12px;color:#000;letter-spacing:0.65px;">Кол 10</div>
<div class="t" style="left:413.4px;top:752.54px;font-family:'Liberation Sans',sans-serif;font-size:12px;color:#a0a0a0;letter-spacing:-0.45px;">ЗАП</div>
<div class="t" style="left:446.5px;top:752.54px;font-family:'Liberation Sans',sans-serif;font-size:12px;color:#a0a0a0;letter-spacing:-1.23px;">ИСПР</div>
<div class="t" style="left:486.3px;top:752.54px;font-family:'Liberation Sans',sans-serif;font-size:12px;color:#a0a0a0;letter-spacing:-0.45px;">ВДЛ</div>
<div class="t" style="left:519.6px;top:752.54px;font-family:'Liberation Sans',sans-serif;font-size:12px;color:#a0a0a0;letter-spacing:-0.68px;">ЗАМ</div>
<div class="t" style="left:554px;top:752.54px;font-family:'Liberation Sans',sans-serif;font-size:12px;color:#000;letter-spacing:0.22px;">русский (Ро</div>
<svg class="a" style="left:641px;top:750px;" width="24" height="16" viewBox="0 0 24 16"><path d="M1.5 3.5h5l1 1v9h-6z M7.5 4.5h5v9h-5z" fill="#fff" stroke="#000" stroke-width="1"/><path d="M3 6h3M3 8h3M3 10h3M9 6h3M9 8h3" stroke="#000" stroke-width="0.8"/><path d="M13 6l8 8M21 6l-8 8" stroke="#c01818" stroke-width="1.8"/></svg>
<div class="a" style="left:1303px;top:0px;width:63px;height:768px;background:#d2dfe7"></div>
<svg class="a" style="left:1325px;top:12px;" width="18" height="17" viewBox="0 0 18 17"><path d="M0 2.3l7.3-1v7.1H0z M8.3 1.1L17.5 0v8.4H8.3z M0 9.3h7.3v7.1L0 15.4z M8.3 9.3h9.2v7.8l-9.2-1.3z" fill="#000"/></svg>
<svg class="a" style="left:1322px;top:48px;" width="24" height="24" viewBox="0 0 24 24"><circle cx="13.5" cy="9.5" r="6.8" fill="none" stroke="#000" stroke-width="2"/><path d="M8.6 14.4L2 21" stroke="#000" stroke-width="2.2" stroke-linecap="round"/></svg>
<div class="a" style="left:1303px;top:83px;width:61px;height:46px;background:#e8eff3"></div>
<div class="a" style="left:1306px;top:83px;width:1px;height:46px;background:#f4f8fa"></div>
<div class="a" style="left:1364px;top:83px;width:2px;height:46px;background:#d9541e"></div>
<svg class="a" style="left:1323px;top:95px;" width="22" height="22" viewBox="0 0 22 22"><rect x="0.5" y="0.5" width="21" height="21" rx="1" fill="url(#wb)" stroke="#1f3f8f"/><rect x="3" y="3" width="16" height="16" fill="#fff"/><rect x="3" y="3" width="16" height="2" fill="#2b55b8"/><path d="M3.5 6h4l1 6 2-6h2l2 6 1-6h3l-3 11h-2.5l-1.8-6-1.8 6h-2.5z" fill="#2f5fc8"/><defs><linearGradient id="wb" x1="0" y1="0" x2="1" y2="1"><stop offset="0" stop-color="#7aa4f0"/><stop offset="1" stop-color="#1e48a8"/></linearGradient></defs></svg>
<div class="a" style="left:1364px;top:134px;width:2px;height:38px;background:#d9541e"></div>
<div class="a" style="left:1364px;top:322px;width:2px;height:38px;background:#d9703e"></div>
<div class="a" style="left:1364px;top:369px;width:2px;height:38px;background:#d9541e"></div>
<svg class="a" style="left:1322px;top:141px;" width="24" height="24" viewBox="0 0 24 24"><circle cx="12" cy="12" r="11.5" fill="#db4437"/><path d="M12 12L2 6.2A11.5 11.5 0 0 0 6.2 21.9z" fill="#0f9d58"/><path d="M12 12L6.2 21.9A11.5 11.5 0 0 0 22 6.3z" fill="#f4b400"/><path d="M12 12L22 6.3A11.5 11.5 0 0 0 2 6.2z" fill="#db4437"/><path d="M12 6.3H22A11.5 11.5 0 0 0 2 6.2z" fill="#db4437"/><circle cx="12" cy="12" r="5.3" fill="#fff"/><circle cx="12" cy="12" r="4.2" fill="#4285f4"/></svg>
<svg class="a" style="left:1322px;top:188px;" width="24" height="24" viewBox="0 0 24 24"><circle cx="12" cy="12" r="12" fill="#fc3f1d"/><text x="12" y="18.5" text-anchor="middle" font-family="Liberation Sans" font-size="17" font-weight="bold" fill="#fff">Я</text></svg>
<svg class="a" style="left:1325px;top:234px;" width="18" height="24" viewBox="0 0 18 24"><rect x="0.5" y="0.5" width="17" height="23" rx="1" fill="#4a5a6e"/><rect x="2.5" y="2.5" width="13" height="4" fill="#4ad0f0"/><g fill="#dfe6ee"><rect x="2.5" y="9" width="3.5" height="3"/><rect x="7.2" y="9" width="3.5" height="3"/><rect x="12" y="9" width="3.5" height="3"/><rect x="2.5" y="13.5" width="3.5" height="3"/><rect x="7.2" y="13.5" width="3.5" height="3"/><rect x="2.5" y="18" width="3.5" height="3"/><rect x="7.2" y="18" width="3.5" height="3"/></g><rect x="12" y="13.5" width="3.5" height="7.5" fill="#1a4aa0"/></svg>
<div class="a" style="left:1322px;top:282px;width:24px;height:24px;border-radius:50%;background:conic-gradient(from 20deg,#ff3030,#ff30c0,#a040ff,#30a0ff,#30e0e0,#30d040,#f0e020,#ff8020,#ff3030)"></div>
<div class="a" style="left:1329px;top:289px;width:10px;height:10px;border-radius:50%;background:#fff;box-shadow:0 0 3px 2px rgba(255,255,255,0.7)"></div>
<svg class="a" style="left:1323px;top:331px;" width="22" height="18" viewBox="0 0 22 18"><path d="M0.5 1.5h7l2 2h12v14h-21z" fill="#f6c84a"/><path d="M0.5 4.5h21v13h-21z" fill="#fbd766"/><rect x="0.5" y="1.5" width="7" height="2" fill="#e8a82a"/><path d="M5 10.5h12v7h-3.5v-3.5h-5v3.5H5z" fill="#2b7fd4"/></svg>
<svg class="a" style="left:1323px;top:377px;" width="22" height="22" viewBox="0 0 22 22"><rect x="0.5" y="0.5" width="21" height="21" rx="1" fill="url(#pb)" stroke="#8a3a12"/><rect x="3" y="3" width="16" height="16" fill="#fff3ea"/><rect x="3" y="3" width="16" height="2" fill="#c8501a"/><circle cx="8" cy="12" r="3" fill="#e0782a"/><path d="M12 9.5h5M12 12h5M12 14.5h4" stroke="#a04012"/><defs><linearGradient id="pb" x1="0" y1="0" x2="1" y2="1"><stop offset="0" stop-color="#f0a070"/><stop offset="1" stop-color="#b04010"/></linearGradient></defs></svg>
<svg class="a" style="left:1314px;top:542px;" width="12" height="14" viewBox="0 0 12 14"><path d="M9 1.5L3 7l6 5.5" fill="none" stroke="#000" stroke-width="1.4"/></svg>
<svg class="a" style="left:1311px;top:563px;" width="20" height="18" viewBox="0 0 20 18"><path d="M4 3.5a8 8 0 0 1 12 0M4 14.5a8 8 0 0 0 12 0" fill="none" stroke="#000" stroke-width="1.1"/><rect x="4.5" y="6.5" width="8" height="6" rx="1" fill="none" stroke="#000" stroke-width="1.2"/><path d="M12.5 9l3-2v5l-3-2" fill="none" stroke="#000" stroke-width="1.1"/></svg>
<svg class="a" style="left:1335px;top:563px;" width="18" height="18" viewBox="0 0 18 18"><circle cx="9" cy="9" r="8" fill="#f0d020"/><circle cx="9" cy="9" r="8" fill="none" stroke="#30a030" stroke-width="2.2" stroke-dasharray="14 4"/><path d="M9 4.5v9M4.5 9h9" stroke="#1a7a2a" stroke-width="2.4"/></svg>
<svg class="a" style="left:1310px;top:588px;" width="22" height="16" viewBox="0 0 22 16"><path d="M3.5 1.5v4M6.5 1.5v4M2 5.5h6v2a3 3 0 0 1-6 0z" fill="#000" stroke="#000" stroke-width="1"/><path d="M5 10v4" stroke="#000"/><rect x="9.5" y="5.5" width="11" height="7" fill="none" stroke="#000" stroke-width="1.1"/><path d="M12.5 7l5 4M17.5 7l-5 4" stroke="#000" stroke-width="1.1"/></svg>
<svg class="a" style="left:1337px;top:586px;" width="18" height="18" viewBox="0 0 18 18"><path d="M3 15a12 12 0 0 1 12-12M6 15a9 9 0 0 1 9-9M9 15a6 6 0 0 1 6-6" fill="none" stroke="#000" stroke-width="1.3"/><circle cx="14" cy="14" r="1.8" fill="#000"/></svg>
<svg class="a" style="left:1311px;top:610px;" width="20" height="18" viewBox="0 0 20 18"><path d="M2.5 6.5h3l4-4v13l-4-4h-3z" fill="none" stroke="#000" stroke-width="1.2"/><path d="M12 6.5a3.5 3.5 0 0 1 0 5M14.5 4a7 7 0 0 1 0 10" fill="none" stroke="#000" stroke-width="1.2"/><path d="M17 2a10 10 0 0 1 0 14" fill="none" stroke="#999" stroke-width="1.1"/></svg>
<div class="t" style="left:1323.2px;top:642.34px;font-family:'Liberation Sans',sans-serif;font-size:12px;color:#000;letter-spacing:-0.74px;">РУС</div>
<div class="t" style="left:1321px;top:680.84px;font-family:'Liberation Sans',sans-serif;font-size:12px;color:#000;letter-spacing:-0.61px;">12:40</div>
<div class="t" style="left:1306.8px;top:697.84px;font-family:'Liberation Sans',sans-serif;font-size:12px;color:#000;letter-spacing:-0.65px;">06.09.2025</div>
<svg class="a" style="left:1322px;top:728px;" width="22" height="22" viewBox="0 0 22 22"><path d="M2.5 3.5h17v12h-6.5l-2 3-2-3h-6.5z" fill="none" stroke="#000" stroke-width="1.3"/></svg></body></html>
